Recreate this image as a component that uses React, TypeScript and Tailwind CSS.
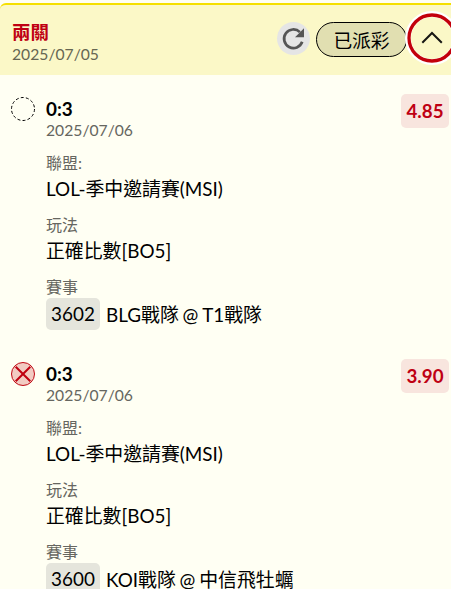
type Leg = {
  lost: boolean;
  pick: string;
  date: string;
  odds: string;
  league: string;
  play: string;
  code: string;
  match: string;
};

const legs: Leg[] = [
  { lost: false, pick: '0:3', date: '2025/07/06', odds: '4.85', league: 'LOL-季中邀請賽(MSI)', play: '正確比數[BO5]', code: '3602', match: 'BLG戰隊 @ T1戰隊' },
  { lost: true, pick: '0:3', date: '2025/07/06', odds: '3.90', league: 'LOL-季中邀請賽(MSI)', play: '正確比數[BO5]', code: '3600', match: 'KOI戰隊 @ 中信飛牡蠣' },
];

function StatusIcon({ lost }: { lost: boolean }) {
  return (
    <svg className="mt-[22px] h-6 w-6 shrink-0" viewBox="0 0 24 24" fill="none">
      {lost ? (
        <>
          <circle cx="12" cy="12" r="11.5" fill="#f2cbc2" stroke="#bf0712" />
          <path d="M4.7 4.7 19.3 19.3M19.3 4.7 4.7 19.3" stroke="#c00010" strokeWidth="2" />
        </>
      ) : (
        <circle cx="12" cy="12" r="11.5" stroke="#000" strokeDasharray="3 2.16" />
      )}
    </svg>
  );
}

function Field({ label, value }: { label: string; value: string }) {
  return (
    <div className="h-[62px]">
      <div className="h-6 text-base leading-6 text-[#666660]">{label}</div>
      <div className="h-[28px] text-[18.87px] leading-[28px]">{value}</div>
    </div>
  );
}

function LegCard({ leg }: { leg: Leg }) {
  return (
    <article className="flex h-[265px] pl-[11px] pr-[2px]">
      <StatusIcon lost={leg.lost} />
      <div className="ml-[11px] min-w-0 flex-1 whitespace-nowrap pt-[21px]">
        <div className="h-6 text-[18.87px] font-bold leading-[25px]">{leg.pick}</div>
        <div className="h-[31px] text-[15.7px] leading-5 text-[#666660]">{leg.date}</div>
        <Field label="聯盟:" value={leg.league} />
        <Field label="玩法" value={leg.play} />
        <div className="h-[23px] text-base leading-6 text-[#666660]">賽事</div>
        <div className="flex h-8 items-center gap-[6px] text-[18.87px] leading-8">
          <span className="flex h-8 w-[54px] items-center justify-center rounded-[5px] bg-[#e5e5dc]">{leg.code}</span>
          <span className="pt-px [word-spacing:-1px]">{leg.match}</span>
        </div>
      </div>
      <div className="mt-[19px] flex h-[34px] w-12 shrink-0 items-center justify-center rounded-[5px] bg-[#f8e5de] text-[18.75px] font-bold text-[#bf0013]">
        {leg.odds}
      </div>
    </article>
  );
}

export default function App() {
  return (
    <main className="h-[589px] w-[451px] overflow-hidden bg-[#fffff3] pt-[3px] font-['Lato','Noto_Sans_CJK_TC',sans-serif] text-black">
      <header className="relative flex h-[72px] rounded-tl-[6px] border-t-2 border-[#f5df00] bg-[#fbf8c7] pl-3">
        <div className="w-[265px] pt-[14px]">
          <div className="h-[25px] text-[18.5px] font-bold leading-[26px] text-[#bf0013]">兩關</div>
          <div className="text-[15.7px] leading-5 text-[#666652]">2025/07/05</div>
        </div>
        <button className="mt-[17px] flex h-[33px] w-[33px] items-center justify-center rounded-full bg-[#e5e5e5]">
          <svg className="h-[33px] w-[33px]" viewBox="0 0 33 33" fill="none">
            <path d="M25.2 19.8A9.3 9.3 0 1 1 22.9 10.1" stroke="#555" strokeWidth="2.7" />
            <path d="M27 6.3V15.3H18Z" fill="#555" />
          </svg>
        </button>
        <div className="ml-[6px] mt-[17px] flex h-[35px] w-[91px] items-center justify-center rounded-full border border-black bg-[#e1dfb1] pt-[3px] text-[18.75px]">
          已派彩
        </div>
        <svg className="absolute left-[405px] top-[6px] h-[54px] w-[54px]" viewBox="0 0 54 54" fill="none">
          <circle cx="27" cy="27" r="24" fill="#fbf8c7" stroke="#fff" strokeWidth="6" />
          <circle cx="27" cy="27" r="23" stroke="#c3000b" strokeWidth="3.3" />
          <path d="M17.3 31.8 27 22l9.8 9.8" stroke="#171713" strokeWidth="2" />
        </svg>
      </header>
      {legs.map((leg) => (
        <LegCard key={leg.code} leg={leg} />
      ))}
    </main>
  );
}
